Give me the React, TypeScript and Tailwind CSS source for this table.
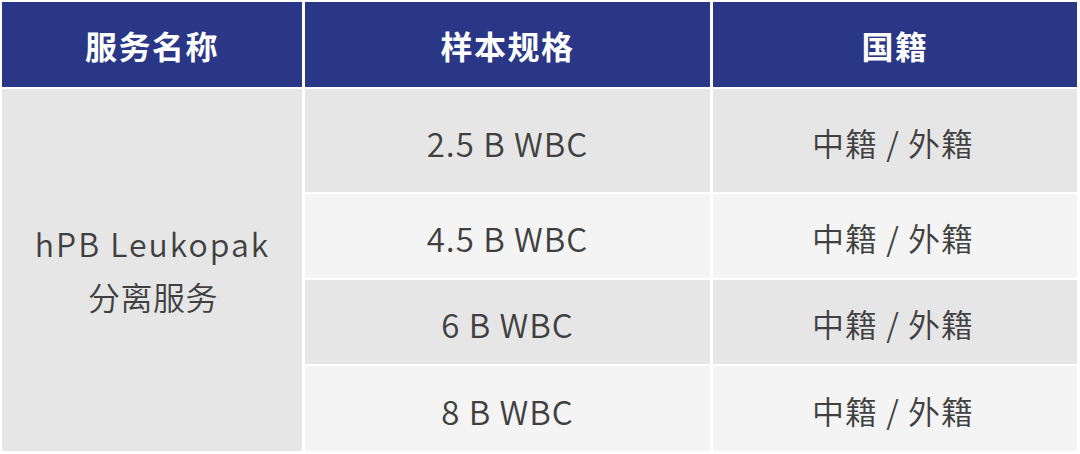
import React from "react";

const rows = [
  { spec: "2.5 B WBC", bg: "bg-[#e6e6e6]" },
  { spec: "4.5 B WBC", bg: "bg-[#f4f4f4]" },
  { spec: "6 B WBC", bg: "bg-[#e6e6e6]" },
  { spec: "8 B WBC", bg: "bg-[#f4f4f4]" },
];

export default function App() {
  return (
    <div
      className="w-[1080px] h-[454px] bg-white pl-[2px] pt-[2px] pr-[3px] pb-[3px]"
      style={{ fontFamily: '"Noto Sans CJK SC", "Noto Sans", sans-serif' }}
    >
      <div className="grid h-full grid-cols-[300px_405px_1fr] grid-rows-[85px_103px_84px_84px_1fr] gap-x-[3px] gap-y-[2px]">
        {["服务名称", "样本规格", "国籍"].map((h) => (
          <div
            key={h}
            className="flex items-center justify-center bg-[#293786] text-white text-[32px] font-bold tracking-[1.5px]"
          >
            {h}
          </div>
        ))}
        <div className="row-span-4 col-start-1 row-start-2 flex flex-col items-center justify-center bg-[#e6e6e6] text-[#404040] text-[32px] font-[350] leading-[53px]">
          <span className="tracking-[2px] pl-[1px]">hPB Leukopak</span>
          <span className="tracking-[0.5px] pl-[2px]">分离服务</span>
        </div>
        {rows.map((r, i) => (
          <React.Fragment key={i}>
            <div
              className={`col-start-2 flex items-center justify-center pt-[6px] ${r.bg} text-[#404040] text-[33px] font-[350] tracking-[1px]`}
            >
              {r.spec}
            </div>
            <div
              className={`col-start-3 flex items-center justify-center pt-[2px] pr-[4px] ${r.bg} text-[#404040] text-[32px] font-[350] tracking-[1px]`}
            >
              中籍 / 外籍
            </div>
          </React.Fragment>
        ))}
      </div>
    </div>
  );
}
